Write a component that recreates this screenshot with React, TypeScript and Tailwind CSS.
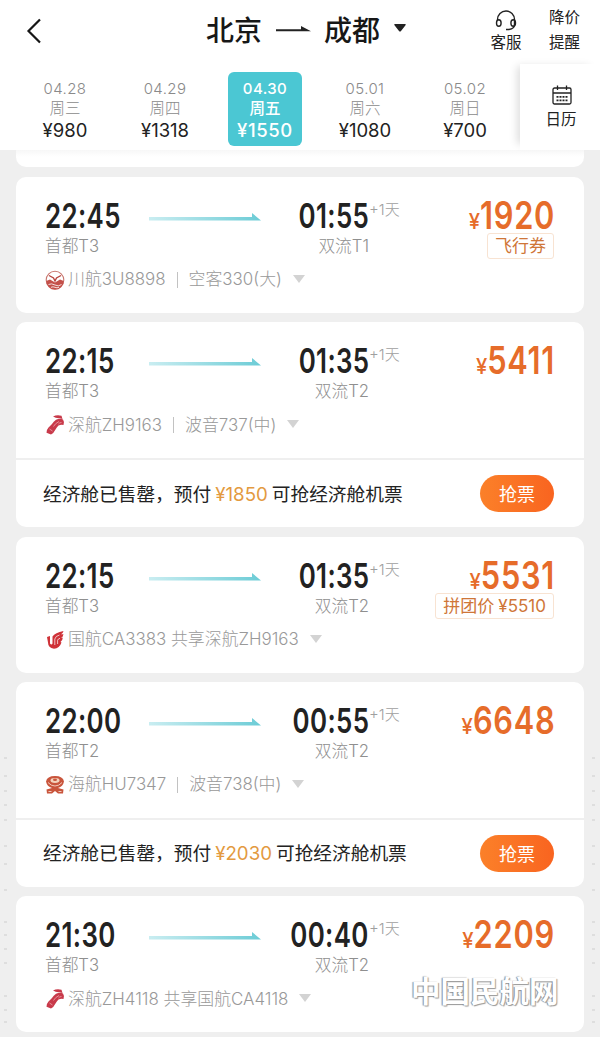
import React from "react";

const days = [
  { date: "04.28", week: "周三", price: "980" },
  { date: "04.29", week: "周四", price: "1318" },
  { date: "04.30", week: "周五", price: "1550", active: true },
  { date: "05.01", week: "周六", price: "1080" },
  { date: "05.02", week: "周日", price: "700" },
];

const flights = [
  {
    logo: "sichuan",
    depart: "22:45",
    from: "首都T3",
    arrive: "01:55",
    to: "双流T1",
    price: "1920",
    tag: ["飞行券"],
    name: "川航3U8898",
    plane: "空客330(大)",
  },
  {
    logo: "shenzhen",
    depart: "22:15",
    from: "首都T3",
    arrive: "01:35",
    to: "双流T2",
    price: "5411",
    name: "深航ZH9163",
    plane: "波音737(中)",
    prepay: "1850",
  },
  {
    logo: "airchina",
    depart: "22:15",
    from: "首都T3",
    arrive: "01:35",
    to: "双流T2",
    price: "5531",
    tag: ["拼团价", "¥5510"],
    name: "国航CA3383 共享深航ZH9163",
  },
  {
    logo: "hainan",
    depart: "22:00",
    from: "首都T2",
    arrive: "00:55",
    to: "双流T2",
    price: "6648",
    name: "海航HU7347",
    plane: "波音738(中)",
    prepay: "2030",
  },
  {
    logo: "shenzhen",
    depart: "21:30",
    from: "首都T3",
    arrive: "00:40",
    to: "双流T2",
    price: "2209",
    name: "深航ZH4118 共享国航CA4118",
  },
];

// faint marks down both page edges
const specks = [758, 776, 791, 805, 820, 846, 864, 890, 922, 935, 949, 963, 996, 1010, 1022];

const Logo = ({ name }: { name: string }) => {
  if (name === "sichuan") {
    return (
      <svg viewBox="0 0 20 20" className="h-5 w-5 shrink-0">
        <circle cx="10" cy="10" r="8.8" fill="#fff" stroke="#c9776f" strokeWidth="1.1" />
        <path d="M1.200 11L5 9.500L10 12.500L15 9.500L18.800 11A8.800 8.800 0 0 1 1.200 11Z" fill="#c4504a" />
        <path d="M4 5.500l4.500 2.500L10 11l1.500-3L16 5.500" fill="none" stroke="#b9443e" strokeWidth="1.400" />
        <path d="M3.500 14.500q3-1.500 6.500.5t6.500-.5M6 17.300q2-1 4 0t4 0" fill="none" stroke="#fff" strokeWidth="0.8" />
      </svg>
    );
  }
  if (name === "shenzhen") {
    return (
      <svg viewBox="0 0 20 20" className="h-5 w-5 shrink-0">
        <path d="M8 1.500Q12-.5 16.500.8L17.500 4L14.500 3.200Q11 3.500 8 1.500Z" fill="#c83a4a" />
        <path
          d="M11 4.800Q15 3 18 4.500Q19.800 7 18.500 10Q16 9.200 13.500 10.500Q12 12 10.500 14.500Q8.500 18.500 6 19.500L1.500 17.800Q1.300 15 3.500 12.500L7 9Q8.500 6.500 11 4.800Z"
          fill="#c83a4a"
        />
        <path d="M14 6.500Q10 8.500 8.500 11.500M16.500 7.500q-2 0-3 1.500M4.500 14l3 2" fill="none" stroke="#eda5ac" strokeWidth="0.800" />
      </svg>
    );
  }
  if (name === "airchina") {
    return (
      <svg viewBox="0 0 20 20" className="h-5 w-5 shrink-0">
        <path
          d="M2 7L5 6V13.500Q6.500 15.500 7.500 13.500V6.500Q10 2.500 18.500 1Q18 3.200 16 4.300L18.500 4.200Q18 7 16 7.800L17.800 7.800Q17.500 11 15.500 12L16.500 12.500Q14.500 18.500 9 18.800Q3 18 3 12.500Z"
          fill="#cf3238"
        />
        <path d="M9.800 15V9Q10.500 6 14.500 5M12.600 14V10.200Q13 8.800 15 8.300" fill="none" stroke="#fff" strokeWidth="0.700" />
      </svg>
    );
  }
  return (
    <svg viewBox="0 0 20 20" className="h-5 w-5 shrink-0">
      <path d="M1 6.500Q2 1 10 1T19 6.500Q18 11.500 13 13L18.500 14.500L18 18.500L13 18.500L10 16L7 18.500L2 18.500L1.500 14.500L7 13Q2 11.500 1 6.500Z" fill="#c9553c" />
      <ellipse cx="10" cy="5.500" rx="4.500" ry="2.400" fill="#f3d3bd" />
      <ellipse cx="10" cy="4.800" rx="2" ry="1.200" fill="#c9553c" />
      <path d="M3 7.500Q6 11 10 11T17 7.500M3.500 16.500h3M13.500 16.500h3" fill="none" stroke="#fbe7dc" strokeWidth="0.800" />
    </svg>
  );
};

const Caret = () => (
  <svg viewBox="0 0 12 8" className="h-2 w-3 shrink-0">
    <path d="M0 0h12L6 8z" fill="#d3d3d3" />
  </svg>
);

const RouteArrow = () => (
  <svg viewBox="0 0 112 10" className="h-2.5 w-28">
    <defs>
      <linearGradient id="route" x1="0" x2="1">
        <stop offset="0" stopColor="#c9edf1" />
        <stop offset="1" stopColor="#6cccd6" />
      </linearGradient>
    </defs>
    <path d="M0 5H103V1L112 8.500H0Z" fill="url(#route)" />
  </svg>
);

const Header = () => (
  <header className="h-[150px] bg-white">
    <div className="flex h-16 items-start">
      <div className="flex h-[62px] w-[206px] items-center pl-[26px]">
        <svg viewBox="0 0 16 26" className="h-[26px] w-4" fill="none" stroke="#161616" strokeWidth="2.200">
          <path d="M14 1.500L2.500 13L14 24.500" />
        </svg>
      </div>
      <div className="flex h-[62px] w-[284px] items-center whitespace-nowrap text-[28px] font-medium text-[#171717]">
        <span>北京</span>
        <svg viewBox="0 0 35 8" className="mb-1 ml-3.5 h-2 w-[35px]">
          <path d="M0 4.300H25V1L35 6.200H0Z" fill="#222" />
        </svg>
        <span className="ml-[13px]">成都</span>
        <svg viewBox="0 0 12 8" className="mb-1.5 ml-3.5 h-2 w-3">
          <path d="M1 0H11Q12.500 0 11.500 1.200L7 7Q6 8.200 5 7L.5 1.200Q-.5 0 1 0Z" fill="#222" />
        </svg>
      </div>
      <div className="flex w-8 flex-col items-center pt-2.5">
        <svg viewBox="0 0 22 21" className="h-[21px] w-[22px]" fill="none" stroke="#222" strokeWidth="1.400">
          <path d="M2.500 11V9.500a8.500 8.500 0 0 1 17 0V14q0 5-5.500 5.500H11" />
          <ellipse cx="3.800" cy="13" rx="2.300" ry="3.300" />
          <ellipse cx="18.200" cy="13" rx="2.300" ry="3.300" />
        </svg>
        <span className="whitespace-nowrap text-[15.500px] leading-6 text-[#222]">客服</span>
      </div>
      <div className="ml-[27px] pt-[5px] text-[15.500px] leading-[25px] text-[#222]">
        <div>降价</div>
        <div>提醒</div>
      </div>
    </div>
    <div className="flex h-[86px]">
      <div className="flex w-[520px] pl-[15px]">
        {days.map((day) => (
          <div key={day.date} className="flex w-[100px] shrink-0 justify-center pt-2">
            <div
              className={`flex h-[74px] w-[74px] flex-col items-center rounded-md pt-[7px] ${
                day.active ? "bg-[#4bc7d3] font-medium text-white" : "font-light text-[#8a8a8a]"
              }`}
            >
              <span className="text-[15px] leading-5 tracking-[0.400px]">{day.date}</span>
              <span className="text-[15.500px] leading-5">{day.week}</span>
              <span
                className={`-mt-px text-[18.500px] leading-6 ${
                  day.active ? "font-medium tracking-[0.600px] text-white" : "font-normal text-[#222]"
                }`}
              >
                ¥{day.price}
              </span>
            </div>
          </div>
        ))}
      </div>
      <div className="w-20 bg-white pt-[21px] shadow-[-7px_-2px_8px_-4px_rgba(0,0,0,0.13)]">
        <div className="flex flex-col items-center pl-0.5">
          <svg viewBox="0 0 20 20" className="ml-0.5 h-5 w-5" fill="none" stroke="#222" strokeWidth="1.300">
            <rect x="1" y="3" width="18" height="16" rx="1.500" />
            <path d="M1 8H19M5.500.5V5M14.500.5V5" />
            <path d="M4.500 11.800h11M4.500 15.300h11" strokeWidth="1.800" strokeDasharray="2 1" />
          </svg>
          <span className="mt-1 text-[15.500px] leading-[22px] text-[#222]">日历</span>
        </div>
      </div>
    </div>
  </header>
);

const FlightCard = ({ flight }: { flight: (typeof flights)[number] }) => (
  <article className="rounded-[10px] bg-white">
    <div className="h-[136px] px-[29px] pt-5">
      <div className="flex h-[61px] whitespace-nowrap">
        <div className="w-[104px]">
          <div className="h-[38px] w-[74px] origin-left scale-x-[0.75] text-[34.500px] font-semibold leading-[38px] tracking-[0.500px] text-[#222]">
            {flight.depart}
          </div>
          <div className="text-[16.700px] font-light leading-[22px] text-[#8f8f8f]">{flight.from}</div>
        </div>
        <div className="w-28 pt-[15px]">
          <RouteArrow />
        </div>
        <div className="flex w-[108px] flex-col items-end">
          <div className="h-[38px] origin-right scale-x-[0.75] text-[34.500px] font-semibold leading-[38px] tracking-[0.500px] text-[#222]">
            {flight.arrive}
          </div>
          <div className="text-[16.700px] font-light leading-[22px] text-[#8f8f8f]">{flight.to}</div>
        </div>
        <div className="w-8 pt-px text-[15px] font-light leading-6 text-[#9f9f9f]">+1天</div>
        <div className="flex flex-1 flex-col items-end text-[#e66c2a]">
          <div className="-mt-px flex h-[37px] origin-right scale-x-[0.8] items-baseline font-semibold">
            <span className="inline-block origin-right scale-x-[1.15] text-[22px] font-medium">¥</span>
            <span className="text-[38.500px] leading-[38px] tracking-[0.900px]">{flight.price}</span>
          </div>
          {flight.tag && (
            <div className="mr-px flex h-7 items-center gap-1 rounded-[3px] border border-[#f8e3d2] px-[7px] text-[17px] leading-6 text-[#cf7638]">
              {flight.tag.map((part) => (
                <span key={part}>{part}</span>
              ))}
            </div>
          )}
        </div>
      </div>
      <div className="mt-[11px] flex h-[22px] items-center whitespace-nowrap text-[16.900px] font-light text-[#999]">
        <Logo name={flight.logo} />
        <span className="ml-[3px]">{flight.name}</span>
        {flight.plane && (
          <>
            <span className="mx-[11px] h-4 w-px bg-[#c2c2c2]" />
            <span>{flight.plane}</span>
          </>
        )}
        <span className="mb-0.5 ml-[11px] flex">
          <Caret />
        </span>
      </div>
    </div>
    {flight.prepay && (
      <div className="flex h-[69px] items-center justify-between border-t-2 border-[#efefef] pl-[27px] pr-[30px]">
        <div className="flex items-center whitespace-nowrap pt-0.5 text-[18.700px] text-[#222]">
          <span>经济舱已售罄，预付</span>
          <span className="mx-1 text-[#e39a3f]">¥{flight.prepay}</span>
          <span>可抢经济舱机票</span>
        </div>
        <button className="h-[37px] w-[74px] rounded-full bg-linear-to-r from-[#fb8029] to-[#f96420] pt-0.5 text-[18px] text-white">
          抢票
        </button>
      </div>
    )}
  </article>
);

const App = () => (
  <div className="relative h-[1037px] w-[600px] overflow-hidden bg-[#efefef] font-[Inter,'Noto_Sans_CJK_SC',sans-serif]">
    <Header />
    <main className="px-4">
      <div className="h-[17px] rounded-b-[10px] bg-linear-to-b from-[#f7f7f7] to-white to-40%" />
      <div className="flex flex-col gap-[9.300px] pt-2.5">
        {flights.map((flight, index) => (
          <FlightCard key={index} flight={flight} />
        ))}
      </div>
    </main>
    <svg viewBox="0 0 600 1037" className="pointer-events-none absolute inset-0 h-full w-full">
      {specks.map((y) => (
        <path key={y} d={`M4 ${y}h3M592 ${y}h3`} stroke="#d9d9d9" strokeWidth="1.500" />
      ))}
    </svg>
    {/* Site watermark */}
    <div className="absolute left-[411px] top-[973px] whitespace-nowrap text-[29.500px] font-bold leading-9 text-white [text-shadow:-1px_0_1px_#888,1px_1px_1px_#999]">
      中国民航网
    </div>
  </div>
);

export default App;
